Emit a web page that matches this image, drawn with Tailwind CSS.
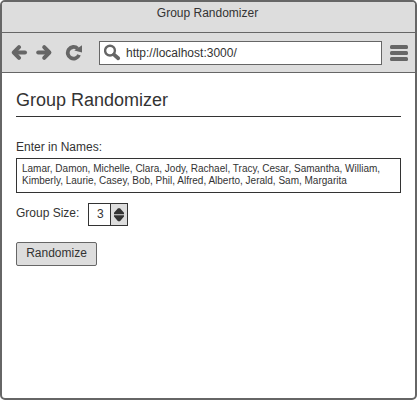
<!DOCTYPE html>
<html lang="en">
<head>
<meta charset="utf-8">
<title>Group Randomizer</title>
<script src="https://cdn.jsdelivr.net/npm/@tailwindcss/browser@4"></script>
</head>
<body class="bg-white">
<div class="flex h-[400px] w-[417px] flex-col overflow-hidden rounded-[5px] border-2 border-[#666] bg-white font-['Liberation_Sans',Arial,sans-serif] text-xs text-[#333]">
  <header class="shrink-0 bg-[#ddd]">
    <div class="h-[31px] border-b border-[#666] pt-[3px] pr-[2px] text-center leading-4 whitespace-nowrap">Group Randomizer</div>
    <div class="flex h-10 items-start border-b border-[#666] pt-2 pl-[9px]">
      <svg class="mt-[3px] h-[17px] w-[17px] shrink-0" viewBox="0 0 17 17" fill="none" stroke="#666" stroke-width="4" stroke-linejoin="round" stroke-linecap="round"><path d="M8 3.2L2.8 8.5L8 13.8"/><path d="M14 8.5H4"/></svg>
      <svg class="mt-[3px] ml-2 h-[17px] w-[17px] shrink-0" viewBox="0 0 17 17" fill="none" stroke="#666" stroke-width="4" stroke-linejoin="round" stroke-linecap="round"><path d="M8.2 3.2L13.4 8.5L8.2 13.8"/><path d="M2.2 8.5H12"/></svg>
      <svg class="mt-[3px] ml-3 h-[17px] w-[18px] shrink-0" viewBox="0 0 18 17" fill="none" stroke="#666"><path d="M12.6 4.6A5.8 5.8 0 1 0 14 10.8" stroke-width="3.8"/><path d="M17 1.2V8.6L9.3 6.6Z" fill="#666" stroke="none"/></svg>
      <div class="ml-[16px] flex h-6 w-[283px] items-start border border-[#666] bg-white">
        <svg class="mt-[2px] ml-1 h-[18px] w-[18px] shrink-0" viewBox="0 0 18 18" fill="none" stroke="#666"><circle cx="6" cy="6.6" r="4.9" stroke-width="2.4"/><path d="M10 10.6L14.2 14.2" stroke-width="3.8" stroke-linecap="round"/></svg>
        <span class="mt-[3px] ml-1 leading-4">http://localhost:3000/</span>
      </div>
      <svg class="mt-[3px] ml-2 h-[18px] w-[18px] shrink-0" viewBox="0 0 18 18" fill="#666"><rect y="1" width="18" height="4" rx="1.5"/><rect y="7" width="18" height="4" rx="1.5"/><rect y="13" width="18" height="4" rx="1.5"/></svg>
    </div>
  </header>
  <main class="flex flex-col items-start px-[14px]">
    <h1 class="h-11 w-full border-b border-[#333] pt-4 text-lg leading-[22px]">Group Randomizer</h1>
    <label class="mt-[22px] leading-4">Enter in Names:</label>
    <div class="mt-[3px] h-[35px] w-full border border-[#333] pt-1 pl-[5px] text-[10px] leading-3 whitespace-nowrap">Lamar, Damon, Michelle, Clara, Jody, Rachael, Tracy, Cesar, Samantha, William,<br>Kimberly, Laurie, Casey, Bob, Phil, Alfred, Alberto, Jerald, Sam, Margarita</div>
    <div class="mt-[10px] flex h-[23px]">
      <span class="mt-[2px] w-[72px] leading-4 whitespace-nowrap">Group Size:</span>
      <div class="flex h-[23px] w-10 border border-[#333]">
        <span class="w-[21px] pt-[2px] pl-2 leading-4">3</span>
        <div class="flex w-[17px] items-start border-l border-[#333] bg-[#ddd]">
          <svg class="mt-1 ml-[3px] h-[14px] w-[10px]" viewBox="0 0 10 14" fill="#333"><path d="M0 6.2V4.8L4 0.2H6L10 4.8V6.2ZM0 7.2H10V8.6L6 13.3H4L0 8.6Z"/></svg>
        </div>
      </div>
    </div>
    <button class="mt-4 h-6 w-[81px] rounded-[2px] border border-[#666] bg-[#ddd] pb-[2px] leading-4">Randomize</button>
  </main>
</div>
</body>
</html>
